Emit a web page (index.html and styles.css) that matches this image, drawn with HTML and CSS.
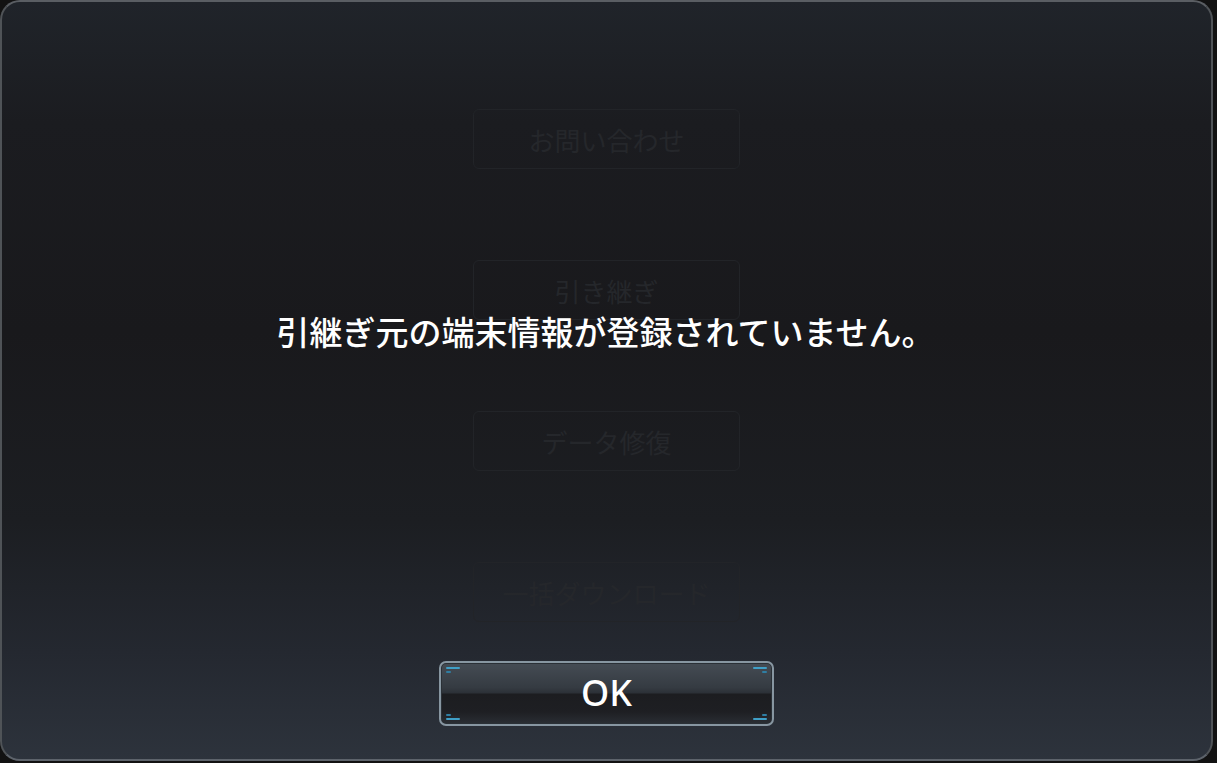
FILE: index.html
```html
<!DOCTYPE html>
<html lang="ja">
<head>
<meta charset="utf-8">
<title>Dialog</title>
<link rel="stylesheet" href="styles.css">
</head>
<body>
<div class="panel">
  <div class="menu">
    <div class="menu-btn">お問い合わせ</div>
    <div class="menu-btn">引き継ぎ</div>
    <div class="menu-btn">データ修復</div>
    <div class="menu-btn">一括ダウンロード</div>
  </div>
  <div class="dialog">
    <p class="message">引継ぎ元の端末情報が登録されていません。</p>
    <button class="ok">
      <span class="acc tl"></span><span class="acc tr"></span>
      <span class="acc bl"></span><span class="acc br"></span>
      <span class="ok-label">OK</span>
    </button>
  </div>
</div>
</body>
</html>
```
FILE: styles.css
```css
html, body {
  margin: 0;
  padding: 0;
  background: #121212;
  width: 1217px;
  height: 763px;
  overflow: hidden;
}
body {
  font-family: "Noto Sans CJK JP", "Noto Sans", sans-serif;
}
.panel {
  box-sizing: border-box;
  margin: 0 4px 0 0;
  width: 1213px;
  height: 761px;
  border: 2px solid #4f5357;
  border-top-color: #5a5e63;
  border-bottom-color: #5d636b;
  border-radius: 20px;
  background: linear-gradient(to bottom, #20242a 0px, #1b1c20 120px, #19191c 330px, #1c1e22 520px, #242830 650px, #2d333c 758px);
  display: grid;
  grid-template-areas: "stack";
  overflow: hidden;
}
.menu, .dialog {
  grid-area: stack;
}
.menu {
  display: flex;
  flex-direction: column;
  align-items: center;
  padding-top: 107px;
  gap: 91px;
}
.menu-btn {
  box-sizing: border-box;
  width: 267px;
  height: 60px;
  border: 1px solid #222428;
  border-radius: 6px;
  display: flex;
  align-items: center;
  justify-content: center;
  color: #25272b;
  font-size: 26px;
  font-weight: 400;
  background: rgba(255,255,255,0.005);
}
.dialog {
  display: flex;
  flex-direction: column;
  align-items: center;
}
.message {
  margin: 304px 0 0 0;
  color: #ffffff;
  font-size: 33px;
  font-weight: 500;
  line-height: 50px;
  padding-right: 2px;
}
.ok {
  position: relative;
  margin-top: 305px;
  box-sizing: border-box;
  width: 335px;
  height: 65px;
  border: 2px solid #8796a1;
  border-radius: 7px;
  padding: 0;
  background: linear-gradient(to bottom, #454c54 0%, #353b42 40%, #2c3137 49%, #1c1d20 51%, #1e1f23 80%, #2a2e34 100%);
  box-shadow: inset 0 0 0 1px #2a3036;
  display: flex;
  align-items: center;
  justify-content: center;
  font-family: "Noto Sans", "Roboto", sans-serif;
}
.ok-label {
  color: #ffffff;
  font-size: 36px;
  font-weight: 500;
  line-height: 40px;
  margin-top: -2px;
}
.acc {
  position: absolute;
  width: 14px;
  height: 2px;
  background: #3f9fc7;
  border-radius: 1px;
}
.acc::after {
  content: "";
  position: absolute;
  width: 5px;
  height: 2px;
  background: #2f7ea3;
  border-radius: 1px;
}
.tl { top: 4px; left: 5px; }
.tl::after { top: 4px; left: 0; }
.tr { top: 4px; right: 5px; }
.tr::after { top: 4px; right: 0; }
.bl { bottom: 4px; left: 5px; }
.bl::after { bottom: 4px; left: 0; }
.br { bottom: 4px; right: 5px; }
.br::after { bottom: 4px; right: 0; }
```
